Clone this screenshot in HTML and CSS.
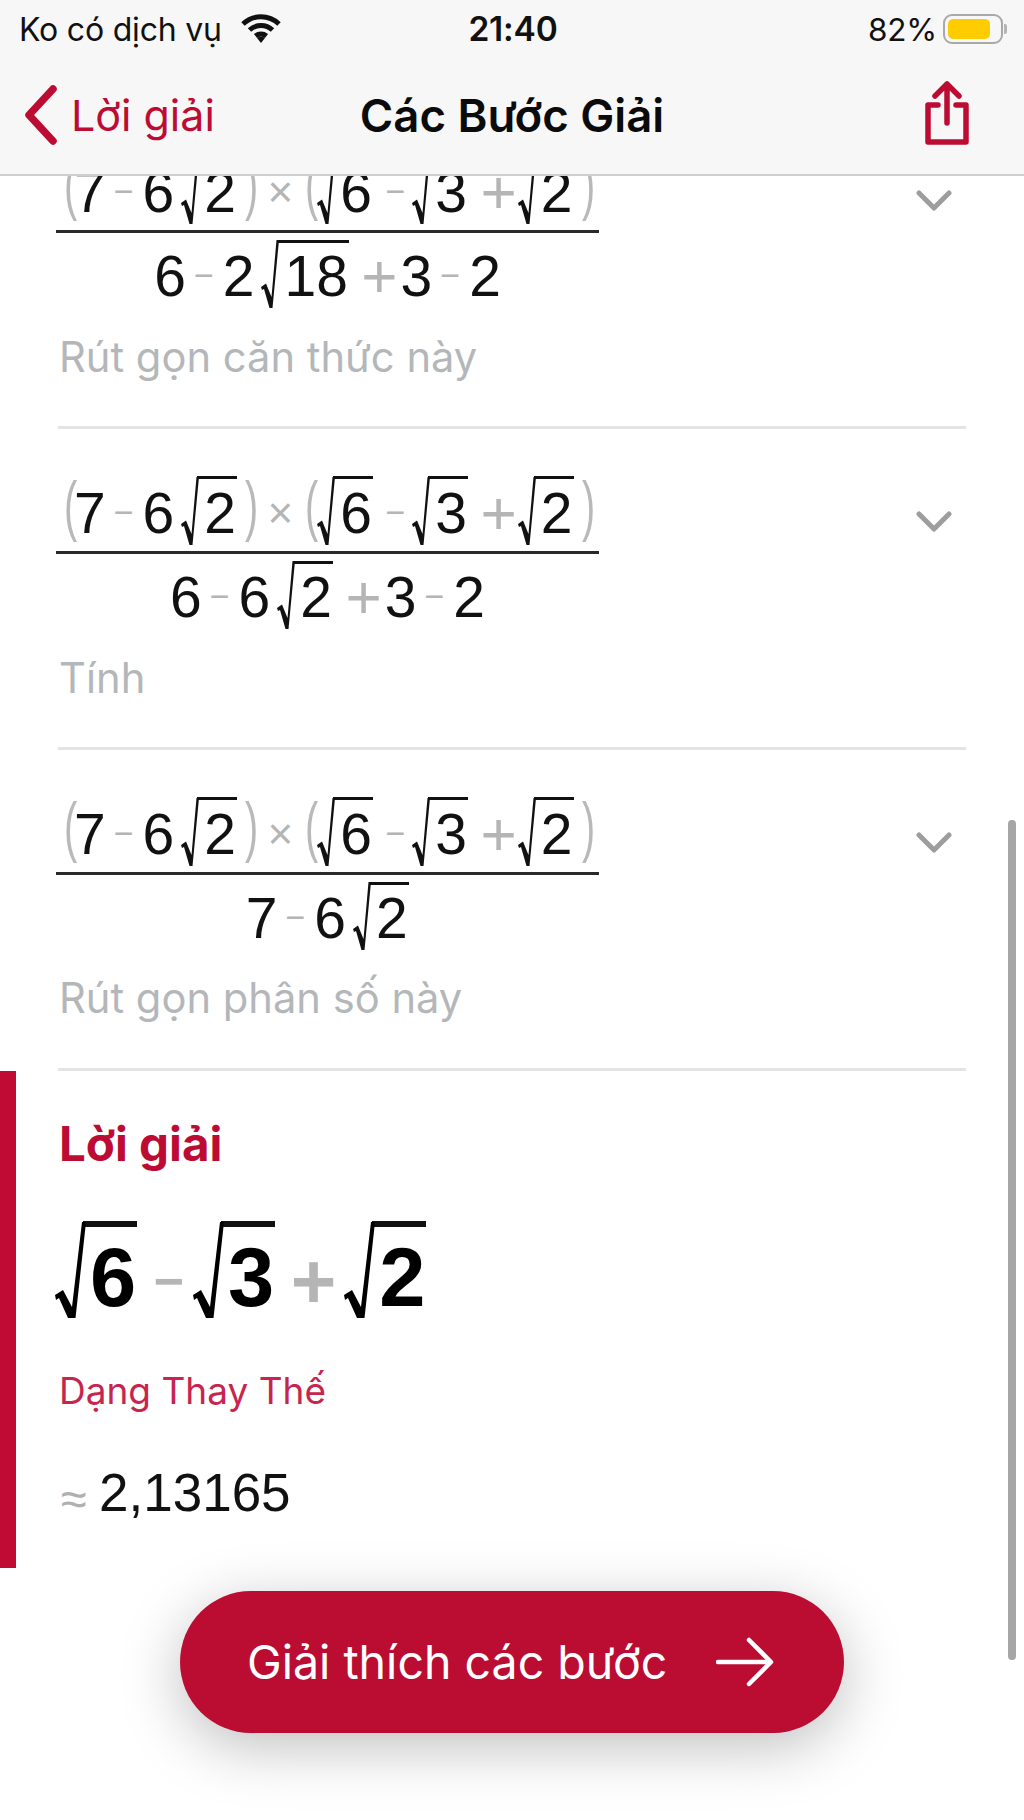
FILE: index.html
```html
<!DOCTYPE html>
<html lang="vi">
<head>
<meta charset="utf-8">
<title>Các Bước Giải</title>
<link rel="stylesheet" href="styles.css">
</head>
<body>
<svg class="defs" width="0" height="0" aria-hidden="true"><defs>
<path id="surd" d="M0 47 L5 43.500 L10.500 57 L15.500 0 H18 L11.500 68 H8.500 L3 49 L1 50 Z"/>
<path id="surdb" d="M0 73 L8 68 L17 85 L27 0 H31 L20.500 96 H13 L4 76 L1 78 Z"/>
</defs></svg>
<div class="phone">
  <header class="top">
    <div class="status">
      <div class="st-left"><span>Ko có dịch vụ</span>
        <svg class="wifi" viewBox="0 0 42 30"><path d="M3 11 A26 26 0 0 1 39 11" /><path d="M9.500 17 A17 17 0 0 1 32.500 17"/><path d="M15.500 23 A9 9 0 0 1 26.500 23"/><path class="dot" d="M21 30 L17 25 A6 6 0 0 1 25 25 Z"/></svg>
      </div>
      <div class="time">21:40</div>
      <div class="st-right"><span>82%</span><span class="battery"><span class="level"></span></span><span class="nub"></span></div>
    </div>
    <nav class="nav">
      <div class="back">
        <svg class="chev" viewBox="0 0 34 60"><path d="M29 4 L5 30 L29 56"/></svg>
        <span>Lời giải</span>
      </div>
      <div class="title">Các Bước Giải</div>
      <div class="share-wrap">
        <svg class="share" viewBox="0 0 46 64"><path d="M14 24 H4 V61 H42 V24 H32"/><path d="M23 42 V3 M11 15 L23 3 L35 15"/></svg>
      </div>
    </nav>
  </header>

  <main class="scroll">
    <div class="content">
      <section class="step">
        <div class="frac">
          <div class="num"><span class="paren">(</span><span>7</span><span class="op minus">−</span><span>6</span><span class="rad"><svg class="surd" viewBox="0 0 18 68"><use href="#surd"/></svg><span class="rc">2</span></span><span class="paren close">)</span><span class="op times">×</span><span class="paren open2">(</span><span class="rad first"><svg class="surd" viewBox="0 0 18 68"><use href="#surd"/></svg><span class="rc">6</span></span><span class="op minus">−</span><span class="rad"><svg class="surd" viewBox="0 0 18 68"><use href="#surd"/></svg><span class="rc">3</span></span><span class="op plus">+</span><span class="rad"><svg class="surd" viewBox="0 0 18 68"><use href="#surd"/></svg><span class="rc">2</span></span><span class="paren close">)</span></div>
          <div class="den"><span>6</span><span class="op minus">−</span><span>2</span><span class="rad"><svg class="surd" viewBox="0 0 18 68"><use href="#surd"/></svg><span class="rc">18</span></span><span class="op plus">+</span><span>3</span><span class="op minus">−</span><span>2</span></div>
        </div>
        <p class="hint">Rút gọn căn thức này</p>
        <svg class="down" viewBox="0 0 36 22"><path d="M3 3 L18 18 L33 3"/></svg>
      </section>

      <section class="step">
        <div class="frac">
          <div class="num"><span class="paren">(</span><span>7</span><span class="op minus">−</span><span>6</span><span class="rad"><svg class="surd" viewBox="0 0 18 68"><use href="#surd"/></svg><span class="rc">2</span></span><span class="paren close">)</span><span class="op times">×</span><span class="paren open2">(</span><span class="rad first"><svg class="surd" viewBox="0 0 18 68"><use href="#surd"/></svg><span class="rc">6</span></span><span class="op minus">−</span><span class="rad"><svg class="surd" viewBox="0 0 18 68"><use href="#surd"/></svg><span class="rc">3</span></span><span class="op plus">+</span><span class="rad"><svg class="surd" viewBox="0 0 18 68"><use href="#surd"/></svg><span class="rc">2</span></span><span class="paren close">)</span></div>
          <div class="den"><span>6</span><span class="op minus">−</span><span>6</span><span class="rad"><svg class="surd" viewBox="0 0 18 68"><use href="#surd"/></svg><span class="rc">2</span></span><span class="op plus">+</span><span>3</span><span class="op minus">−</span><span>2</span></div>
        </div>
        <p class="hint">Tính</p>
        <svg class="down" viewBox="0 0 36 22"><path d="M3 3 L18 18 L33 3"/></svg>
      </section>

      <section class="step">
        <div class="frac">
          <div class="num"><span class="paren">(</span><span>7</span><span class="op minus">−</span><span>6</span><span class="rad"><svg class="surd" viewBox="0 0 18 68"><use href="#surd"/></svg><span class="rc">2</span></span><span class="paren close">)</span><span class="op times">×</span><span class="paren open2">(</span><span class="rad first"><svg class="surd" viewBox="0 0 18 68"><use href="#surd"/></svg><span class="rc">6</span></span><span class="op minus">−</span><span class="rad"><svg class="surd" viewBox="0 0 18 68"><use href="#surd"/></svg><span class="rc">3</span></span><span class="op plus">+</span><span class="rad"><svg class="surd" viewBox="0 0 18 68"><use href="#surd"/></svg><span class="rc">2</span></span><span class="paren close">)</span></div>
          <div class="den"><span>7</span><span class="op minus">−</span><span>6</span><span class="rad"><svg class="surd" viewBox="0 0 18 68"><use href="#surd"/></svg><span class="rc">2</span></span></div>
        </div>
        <p class="hint">Rút gọn phân số này</p>
        <svg class="down" viewBox="0 0 36 22"><path d="M3 3 L18 18 L33 3"/></svg>
      </section>

      <section class="solution">
        <h2 class="sol-title">Lời giải</h2>
        <div class="sol-math"><span class="rad"><svg class="surd" viewBox="0 0 30 96"><use href="#surdb"/></svg><span class="rc">6</span></span><span class="op minus">−</span><span class="rad"><svg class="surd" viewBox="0 0 30 96"><use href="#surdb"/></svg><span class="rc">3</span></span><span class="op plus">+</span><span class="rad"><svg class="surd" viewBox="0 0 30 96"><use href="#surdb"/></svg><span class="rc">2</span></span></div>
        <h3 class="alt-title">Dạng Thay Thế</h3>
        <div class="approx"><span class="apx">≈</span><span>2,13165</span></div>
      </section>
    </div>
  </main>

  <div class="scrollbar"></div>
  <button class="cta"><span>Giải thích các bước</span>
    <svg class="arrow" viewBox="0 0 58 50"><path d="M2 25 H54 M33 3 L55 25 L33 47"/></svg>
  </button>
</div>
</body>
</html>
```

FILE: styles.css
```css
* { box-sizing: border-box; }
html, body { margin: 0; padding: 0; background: #fff; }
.defs { position: absolute; }
.phone {
  position: relative;
  width: 1024px;
  height: 1820px;
  overflow: hidden;
  display: flex;
  flex-direction: column;
  font-family: "Inter", "Liberation Sans", sans-serif;
  color: #111;
}

/* header */
.top {
  flex: none;
  height: 176px;
  background: #f7f7f7;
  border-bottom: 2px solid #cfcfcf;
  position: relative;
  z-index: 2;
  display: flex;
  flex-direction: column;
}
.status {
  height: 58px;
  padding: 0 17px 0 19px;
  display: grid;
  grid-template-columns: 1fr auto 1fr;
  align-items: center;
  font-size: 32px;
  letter-spacing: -0.2px;
}
.st-left { display: flex; align-items: center; gap: 18px; }
.wifi { width: 42px; height: 30px; margin-top: -2px; }
.wifi path { fill: none; stroke: #111; stroke-width: 5; }
.wifi .dot { fill: #111; stroke: none; }
.time { font-weight: 600; font-size: 33.500px; }
.st-right { display: flex; align-items: center; justify-content: flex-end; font-size: 31.500px; }
.battery {
  width: 60px;
  height: 30px;
  margin-left: 6px;
  border: 2px solid #a9a9a9;
  border-radius: 9px;
  padding: 3px;
  display: flex;
}
.level { width: 42px; background: #ffcc00; border-radius: 5px; }
.nub { width: 3px; height: 10px; background: #b5b5b5; border-radius: 0 2px 2px 0; margin-left: 1px; }

.nav {
  flex: 1;
  padding: 0 24px;
  display: grid;
  grid-template-columns: 1fr auto 1fr;
  align-items: center;
  margin-top: -2px;
}
.back { display: flex; align-items: center; gap: 13px; color: #bd0c33; font-size: 43px; }
.chev { width: 34px; height: 60px; flex: none; }
.chev path { fill: none; stroke: #bd0c33; stroke-width: 7.500; stroke-linecap: round; stroke-linejoin: round; }
.title { font-size: 45.500px; font-weight: 600; color: #0b0b0b; }
.share-wrap { display: flex; justify-content: flex-end; padding-right: 30px; }
.share { width: 46px; height: 64px; margin-top: -4px; }
.share path { fill: none; stroke: #bd0c33; stroke-width: 5.500; stroke-linecap: round; stroke-linejoin: round; }

/* scrolled content */
.scroll { flex: 1; overflow: hidden; }
.content { margin-top: -68px; padding-left: 16px; }

.step {
  position: relative;
  height: 321px;
  margin: 0 58px 0 42px;
  border-bottom: 3px solid #e4e4e4;
  padding-top: 47px;
}
.frac { width: 543px; margin-left: -2px; font-family: "Liberation Sans", Arial, sans-serif; font-size: 57px; line-height: 1; color: #111; }
.num {
  display: flex;
  align-items: baseline;
  padding: 0 0 8px 8px;
  border-bottom: 3px solid #2a2a2a;
  white-space: nowrap;
}
.den {
  display: flex;
  align-items: baseline;
  justify-content: center;
  padding-top: 7px;
  white-space: nowrap;
}
.paren {
  color: #b9b9b9;
  font-size: 66px;
  width: 10px;
  transform: translateY(-5px) scaleX(.6);
  transform-origin: left center;
}
.paren.close { margin-left: 8px; }
.paren.open2 { margin-left: 12px; }
.op { color: #b5b5b5; }
.minus { font-size: 34px; margin: 0 9px 0 8px; transform: translateY(-9px); }
.plus { font-size: 62px; margin: 0 7px 0 12px; transform: translateY(1px); }
.times { font-size: 44px; margin: 0 0 0 12px; transform: translateY(-5px); }
.rad + .minus { margin-left: 12px; margin-right: 0; }
.rad + .plus { margin-left: 12px; margin-right: -6px; }
.den .rad + .plus { margin-right: 3px; }

.rad { position: relative; display: block; padding-left: 16px; margin-left: 7px; }
.rad.first { margin-left: 2px; }
.rad + .paren.close { margin-left: 8px; }
.surd { position: absolute; left: 0; bottom: -3px; width: 18px; height: 68px; overflow: visible; }
.surd use { fill: #111; }
.rc { display: block; border-top: 3px solid #111; padding: 5.500px 1.500px 0 7px; }

.hint {
  margin: 27px 0 0 1px;
  font-size: 41.700px;
  line-height: 48px;
  color: #b4b7b9;
}
.down { position: absolute; top: 82px; right: 14px; width: 36px; height: 22px; }
.down path { fill: none; stroke: #9d9d9d; stroke-width: 5; stroke-linecap: round; stroke-linejoin: round; }

.solution {
  margin-left: -16px;
  height: 497px;
  border-left: 16px solid #c00c34;
  padding: 45px 0 0 43px;
}
.sol-title { margin: 0; font-size: 47.500px; line-height: 56px; font-weight: 700; color: #bd0c33; }
.sol-math {
  margin: 49px 0 0 -4px;
  display: flex;
  align-items: baseline;
  font-family: "Liberation Sans", Arial, sans-serif;
  font-weight: 700;
  font-size: 83px;
  line-height: 1;
  color: #000;
}
.sol-math .rad { margin-left: 0; padding-left: 28px; }
.sol-math .surd { width: 30px; height: 96px; bottom: 1px; }
.sol-math .surd use { fill: #000; }
.sol-math .rc { border-top-width: 6px; padding: 9px 0.500px 0 7px; }
.sol-math .minus { font-size: 52px; margin: 0 9px 0 17px; transform: translateY(-7px); }
.sol-math .plus { font-size: 78px; margin: 0 8px 0 16px; transform: translateY(2px); }
.alt-title { margin: 50px 0 0; font-size: 37px; line-height: 44px; font-weight: 400; color: #c7254e; }
.approx {
  margin-top: 53px;
  display: flex;
  align-items: baseline;
  font-family: "Liberation Sans", Arial, sans-serif;
  font-size: 53px;
  line-height: 1;
}
.apx { color: #b0b0b0; font-size: 47px; width: 38px; margin-left: 2px; transform: translateY(4px); }

/* overlays */
.scrollbar {
  position: absolute;
  left: 1008px;
  top: 820px;
  width: 8px;
  height: 840px;
  background: #a6a6a6;
  border-radius: 4px;
}
.cta {
  position: absolute;
  left: 180px;
  top: 1591px;
  width: 664px;
  height: 142px;
  border: 0;
  border-radius: 71px;
  background: #bb0c32;
  color: #fff;
  font-family: "Inter", "Liberation Sans", sans-serif;
  font-size: 46.500px;
  display: flex;
  align-items: center;
  padding: 0 70px 0 67px;
  justify-content: space-between;
  box-shadow: 0 14px 60px rgba(0, 0, 0, .25);
}
.arrow { width: 58px; height: 50px; }
.arrow path { fill: none; stroke: #fff; stroke-width: 4.500; stroke-linecap: round; stroke-linejoin: round; }
```
